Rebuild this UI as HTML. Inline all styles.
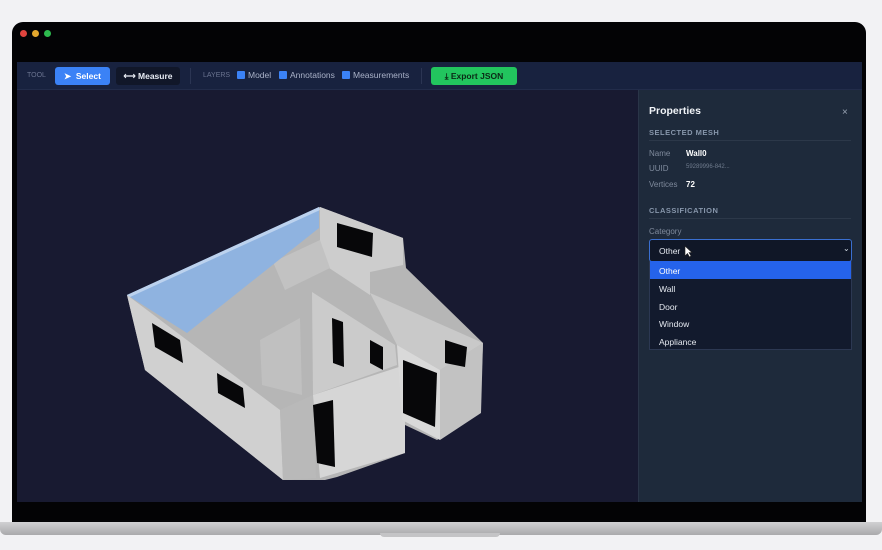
<!DOCTYPE html>
<html><head><meta charset="utf-8"><style>
*{margin:0;padding:0;box-sizing:border-box}
body{width:882px;height:550px;background:#f2f2f4;position:relative;overflow:hidden;font-family:"Liberation Sans",sans-serif}
.abs{position:absolute}
.frame{left:12px;top:22px;width:854px;height:502px;background:#030305;border-radius:11px 11px 0 0}
.dot{width:7px;height:7px;border-radius:50%;top:30px}
.tb{left:17px;top:62px;width:845px;height:28px;background:#18223f;border-bottom:1px solid #222c4a}
.vp{left:17px;top:90px;width:621px;height:412px;background:#181a31}
.panel{left:638px;top:90px;width:224px;height:412px;background:#1e2a3b;border-left:1px solid #2a3548}
.t{position:absolute;white-space:nowrap}
.lbl{font-size:7px;color:#6b7490}
.btn{position:absolute;top:67px;height:18px;border-radius:3px;font-size:8.5px;font-weight:bold;line-height:18px;text-align:center}
.cb{position:absolute;top:71px;width:8px;height:8px;background:#3b82f6;border-radius:1px}
.cbl{position:absolute;top:70px;font-size:8.5px;color:#aab2c8}
.ph{font-size:7.5px;font-weight:bold;color:#8796ab;letter-spacing:.5px}
.k{font-size:8px;color:#7f8a9c}
.v{font-size:8px;color:#fff;font-weight:bold}
.it{position:absolute;left:659px;font-size:8.5px;color:#e5e9f0}
</style></head><body>
<div class="abs frame"></div>
<div class="abs dot" style="left:20px;background:#e0443e"></div>
<div class="abs dot" style="left:32px;background:#e3a72e"></div>
<div class="abs dot" style="left:44px;background:#2dba4e"></div>
<div class="abs tb"></div>
<div class="t lbl" style="left:27px;top:72px">TOOL</div>
<div class="btn" style="left:55px;width:55px;background:#3b82f6;color:#fff">&#x27A4;&nbsp; Select</div>
<div class="btn" style="left:116px;width:64px;background:#111729;color:#e8ecf4">⟷ Measure</div>
<div class="abs" style="left:190px;top:68px;width:1px;height:16px;background:#2b3553"></div>
<div class="t lbl" style="left:203px;top:72px">LAYERS</div>
<div class="cb" style="left:237px"></div><div class="cbl" style="left:248px">Model</div>
<div class="cb" style="left:279px"></div><div class="cbl" style="left:290px">Annotations</div>
<div class="cb" style="left:342px"></div><div class="cbl" style="left:353px">Measurements</div>
<div class="abs" style="left:421px;top:68px;width:1px;height:16px;background:#2b3553"></div>
<div class="btn" style="left:431px;width:86px;background:#22c55e;color:#0b2a16">⤓ Export JSON</div>
<div class="abs vp"></div>
<svg class="abs" style="left:0;top:0" width="882" height="550">
<polygon points="127,295 320,207 403,238 406,268 483,343 480,413 437,440 405,425 405,453 337,477 325,480 283,480 145,370" fill="#b6b6b6"/>
<polygon points="320,207 403,238 403,265 370,272 370,295 320,262" fill="#cdcdcd"/>
<polygon points="273,262 320,240 330,268 285,290" fill="#c2c2c2"/>
<polygon points="312,292 395,345 397,365 313,395" fill="#cbcbcb"/>
<polygon points="260,340 300,318 302,395 262,385" fill="#c0c0c0"/>
<polygon points="127,295 280,410 283,480 145,370" fill="#d0d0d0"/>
<polygon points="280,410 313,395 316,478 283,480" fill="#b9b9b9"/>
<polygon points="313,395 405,365 405,453 320,478" fill="#d6d6d6"/>
<polygon points="370,293 483,343 440,370 397,345" fill="#c9c9c9"/>
<polygon points="397,345 440,370 440,440 402,420" fill="#d9d9d9"/>
<polygon points="440,370 483,343 481,413 440,440" fill="#c2c2c2"/>
<polygon points="127,295 319,207 319,228 187,333" fill="#8fb3e0"/>
<polygon points="127,295 319,207 320,210 130,297" fill="#bcd2ee"/>
<g fill="#070709">
<polygon points="337,223 373,233 372,257 337,247"/>
<polygon points="152,323 180,340 183,363 155,347"/>
<polygon points="217,373 243,388 245,408 218,393"/>
<polygon points="313,405 333,400 335,467 317,463"/>
<polygon points="332,318 343,322 344,367 333,363"/>
<polygon points="403,360 437,373 435,427 403,413"/>
<polygon points="445,340 467,347 465,367 445,363"/>
<polygon points="370,340 383,347 383,370 370,363"/>
</g>
</svg>
<div class="abs panel"></div>
<div class="t" style="left:649px;top:105px;font-size:10.5px;font-weight:bold;color:#f1f4f8">Properties</div>
<div class="t" style="left:842px;top:107px;font-size:10px;color:#9aa5b5">×</div>
<div class="t ph" style="left:649px;top:128px">SELECTED MESH</div>
<div class="abs" style="left:649px;top:140px;width:202px;height:1px;background:#2c3849"></div>
<div class="t k" style="left:649px;top:149px">Name</div><div class="t v" style="left:686px;top:149px">Wall0</div>
<div class="t k" style="left:649px;top:164px">UUID</div><div class="t" style="left:686px;top:164px;font-size:6px;color:#6f7b8d">59289996-842...</div>
<div class="t k" style="left:649px;top:180px">Vertices</div><div class="t v" style="left:686px;top:180px">72</div>
<div class="t ph" style="left:649px;top:206px">CLASSIFICATION</div>
<div class="abs" style="left:649px;top:218px;width:202px;height:1px;background:#2c3849"></div>
<div class="t k" style="left:649px;top:227px">Category</div>
<div class="abs" style="left:649px;top:239px;width:203px;height:23px;background:#101727;border:1px solid #3a6fd0;border-radius:3px"></div>
<div class="t" style="left:659px;top:246px;font-size:8.5px;color:#e5e9f0">Other</div>
<svg class="abs" style="left:684px;top:245px" width="9" height="13"><path d="M1 1 L1 11 L3.5 8.5 L5.5 12 L7 11 L5 7.5 L8 7.5 Z" fill="#fff" stroke="#222" stroke-width=".6"/></svg>
<div class="t" style="left:843px;top:244px;font-size:8px;color:#cfd6e0">⌄</div>
<div class="abs" style="left:649px;top:261px;width:203px;height:89px;background:#121a2d;border:1px solid #2c3852"></div>
<div class="abs" style="left:650px;top:261px;width:201px;height:18px;background:#2563eb"></div>
<div class="it" style="top:266px;color:#fff">Other</div>
<div class="it" style="top:284px">Wall</div>
<div class="it" style="top:302px">Door</div>
<div class="it" style="top:319px">Window</div>
<div class="it" style="top:337px">Appliance</div>
<div class="abs" style="left:0;top:522px;width:882px;height:13px;background:linear-gradient(#d0d0d2,#a9a9ab);border-radius:0 0 6px 6px"></div>
<div class="abs" style="left:380px;top:533px;width:120px;height:4px;background:#c4c4c6;border-radius:0 0 4px 4px"></div>
</body></html>
